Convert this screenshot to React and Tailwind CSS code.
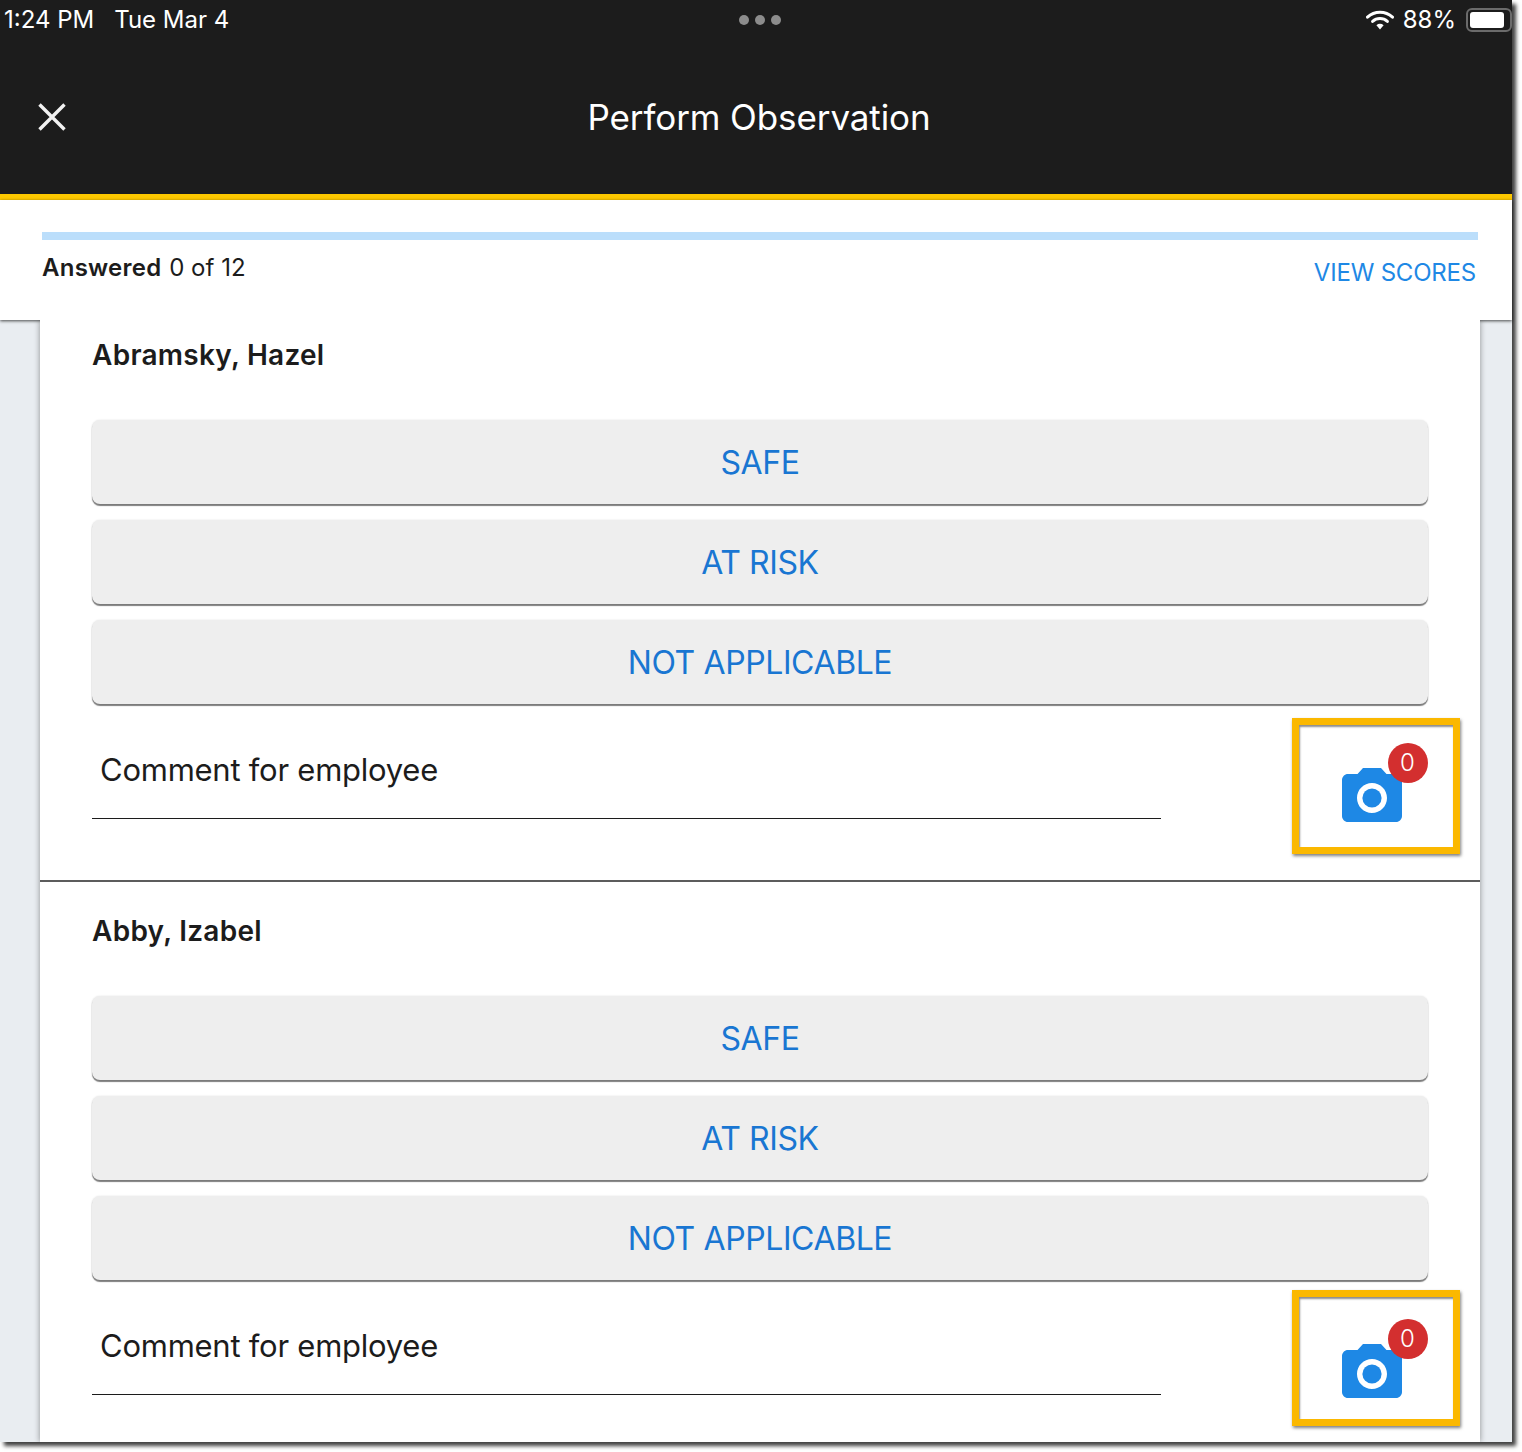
const FONT = "font-['Inter','Liberation_Sans',sans-serif]";

function Wifi() {
  return (
    <svg width="28" height="20" viewBox="0 0 28 20" fill="none" className="block">
      <path d="M1.5 7.2C8.6 0.6 19.4 0.6 26.5 7.2" stroke="#ffffff" strokeWidth="3" strokeLinecap="round" />
      <path d="M6.6 11.4C10.8 7.6 17.2 7.6 21.4 11.4" stroke="#ffffff" strokeWidth="3" strokeLinecap="round" />
      <path d="M10.4 15.2L14 19.4L17.6 15.2C15.4 13.4 12.6 13.4 10.4 15.2Z" fill="#ffffff" />
    </svg>
  );
}

function AnswerButton({ label }) {
  return (
    <button className="w-full h-[84px] pt-[2px] rounded-lg bg-[#eeeeee] text-[32px] leading-none tracking-[-0.4px] text-[#1976d2] shadow-[0_2px_1px_rgba(0,0,0,0.5),0_0_2px_rgba(0,0,0,0.12)]">
      {label}
    </button>
  );
}

function Camera({ boxTop }) {
  return (
    <div className="relative w-[72px] h-[72px] shrink-0 ml-[175px]">
      <div
        className={`absolute left-[-44px] w-[168px] h-[136px] border-[7px] border-[#fbb800] shadow-[1px_2px_3px_rgba(0,0,0,0.5),inset_1px_2px_2px_rgba(0,0,0,0.45)] ${boxTop}`}
      />
      <svg width="72" height="72" viewBox="0 0 24 24" fill="#1e88e5" className="block">
        <circle cx="12" cy="12" r="3.2" />
        <path d="M9 2L7.17 4H4c-1.1 0-2 .9-2 2v12c0 1.1.9 2 2 2h16c1.1 0 2-.9 2-2V6c0-1.1-.9-2-2-2h-3.17L15 2H9zm3 15c-2.76 0-5-2.24-5-5s2.24-5 5-5 5 2.24 5 5-2.24 5-5 5z" />
      </svg>
      <span className="absolute left-[52px] top-[-19px] flex w-10 h-10 pr-[1px] items-center justify-center rounded-full bg-[#d32f2f] text-2xl font-light leading-none text-white">
        0
      </span>
    </div>
  );
}

function Employee({ name, padTop, boxTop, divider }) {
  return (
    <section className={`pl-[52px] pr-[52px] ${padTop} ${divider ? "border-b-2 border-[#5c5c5c] h-[562px]" : ""}`}>
      <h2 className="mb-[50px] text-[28px] leading-[30px] font-semibold tracking-[0.27px] text-[#1c1c1c]">{name}</h2>
      <div className="flex flex-col gap-4">
        <AnswerButton label="SAFE" />
        <AnswerButton label="AT RISK" />
        <AnswerButton label="NOT APPLICABLE" />
      </div>
      <div className="flex items-start mt-[16px]">
        <div className="w-[1069px] h-[99px] border-b border-[#1c1c1c] pl-[8px] pt-[30px] text-[31px] leading-10 tracking-[-0.25px] text-[#1c1c1c]">
          Comment for employee
        </div>
        <div className="pt-[42px]">
          <Camera boxTop={boxTop} />
        </div>
      </div>
    </section>
  );
}

export default function App() {
  return (
    <div className={`w-[1522px] h-[1452px] bg-white ${FONT}`}>
      <div className="relative w-[1512px] h-[1442px] bg-[#e9edf1] shadow-[4px_4px_4px_rgba(0,0,0,0.75)] flex flex-col">
        <header className="h-[200px] shrink-0 bg-[#1c1c1c] border-b-[6px] border-[#fdc800] text-white">
          <div className="relative flex h-10 items-center justify-between text-2xl">
            <div className="flex items-center pl-[4px]">
              <span>1:24 PM</span>
              <span className="ml-[20px]">Tue Mar 4</span>
            </div>
            <div className="absolute left-[739px] top-[15px] flex gap-[6px]">
              <span className="w-[10px] h-[10px] rounded-full bg-[#8c8c8c]" />
              <span className="w-[10px] h-[10px] rounded-full bg-[#8c8c8c]" />
              <span className="w-[10px] h-[10px] rounded-full bg-[#8c8c8c]" />
            </div>
            <div className="flex items-center">
              <Wifi />
              <span className="ml-[9px]">88%</span>
              <div className="ml-[10px] w-[46px] h-[24px] rounded-[6px] border-2 border-[#6b6b6b] p-[2px] pr-[6px]">
                <div className="w-full h-full rounded-[3px] bg-white" />
              </div>
            </div>
          </div>
          <div className="relative flex h-[154px] items-center justify-center pl-[6px]">
            <svg width="28" height="28" viewBox="0 0 28 28" className="absolute left-[38px] top-[63px]">
              <path d="M1.5 1.5L26.5 26.5M26.5 1.5L1.5 26.5" stroke="#f2f2f2" strokeWidth="3.4" />
            </svg>
            <h1 className="text-[35px] leading-10 font-normal tracking-[-0.1px]">Perform Observation</h1>
          </div>
        </header>

        <div className="relative h-[120px] shrink-0 bg-white shadow-[0_1px_3px_rgba(0,0,0,0.7)] pl-[42px] pr-[34px] pt-[32px]">
          <div className="h-2 bg-[#bbdefb]" />
          <div className="flex items-start justify-between">
            <div className="mt-[13px] text-2xl leading-[30px] text-[#1c1c1c]">
              <span className="font-semibold tracking-[0.25px]">Answered</span>{" "}
              <span className="ml-[1px]">0 of 12</span>
            </div>
            <div className="mt-[18px] mr-[2px] text-2xl leading-[30px] tracking-[-0.2px] text-[#1e88e5]">VIEW SCORES</div>
          </div>
        </div>

        <main className="relative flex-1 ml-10 mr-8 bg-white shadow-[0_0_6px_rgba(0,0,0,0.4)] [clip-path:inset(0_-12px_0_-12px)]">
          <Employee name="Abramsky, Hazel" padTop="pt-[20px]" boxTop="top-[-44px]" divider />
          <Employee name="Abby, Izabel" padTop="pt-[34px]" boxTop="top-[-48px]" />
        </main>
      </div>
    </div>
  );
}
